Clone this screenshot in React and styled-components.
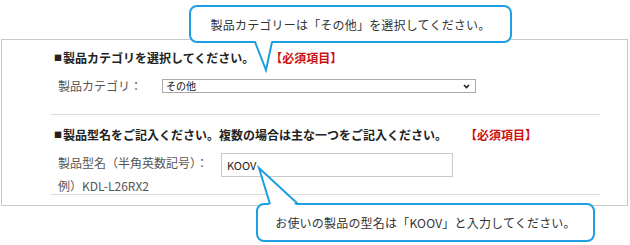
import styled, { createGlobalStyle } from "styled-components";

const GlobalStyle = createGlobalStyle`
  body {
    margin: 0;
    background: #fff;
    font-family: "Noto Sans CJK JP", "Noto Sans", sans-serif;
  }
`;

const Page = styled.div`
  position: relative;
  width: 630px;
  height: 245px;
  overflow: hidden;
  padding-top: 39px;
  box-sizing: border-box;
`;

const Panel = styled.div`
  margin-left: 1px;
  width: 627px;
  height: 167px;
  box-sizing: border-box;
  border: 1px solid #c9c9c9;
  padding: 10px 27px 0 49px;
  display: flex;
  flex-direction: column;
`;

const Heading = styled.div`
  display: flex;
  align-items: center;
  margin-top: ${(p) => p.$top || 0}px;
  padding-left: 3px;
  height: 16px;
  font-size: 12px;
  font-weight: 700;
  line-height: 16px;
  color: #222;
  white-space: nowrap;

  .mark {
    font-size: 8px;
    width: 9px;
  }
`;

const Required = styled.span`
  margin-left: ${(p) => p.$gap}px;
  color: #cc1111;
  font-weight: 700;
`;

const Row = styled.div`
  display: flex;
  align-items: ${(p) => p.$align || "center"};
  margin-top: ${(p) => p.$top}px;
  padding-left: 7px;
`;

const Label = styled.div`
  width: ${(p) => p.$width}px;
  flex-shrink: 0;
  font-size: 12px;
  line-height: 16px;
  color: #555;
  white-space: nowrap;
`;

const LabelColumn = styled.div`
  display: flex;
  flex-direction: column;
  padding-top: 2px;
`;

const Example = styled.div`
  margin-top: 8px;
  font-size: 12px;
  line-height: 14px;
  color: #555;
`;

const SelectBox = styled.div`
  position: relative;
  width: 314px;
  height: 14px;

  select {
    display: block;
    appearance: none;
    width: 314px;
    height: 14px;
    min-height: 0;
    box-sizing: border-box;
    border: 1px solid #a9a9a9;
    border-radius: 0;
    background: #fff;
    padding: 0 0 0 3px;
    margin: 0;
    font-family: inherit;
    font-size: 10px;
    line-height: 12px;
    color: #111;
    outline: none;
  }

  svg {
    position: absolute;
    right: 6px;
    top: 5px;
    pointer-events: none;
  }
`;

const TextInput = styled.input`
  width: 232px;
  height: 24px;
  box-sizing: border-box;
  border: 1px solid #c8c8c8;
  padding: 0 5px;
  margin: 0;
  font-family: inherit;
  font-size: 11px;
  color: #222;
  outline: none;
`;

const Divider = styled.div`
  margin-top: ${(p) => p.$top}px;
  height: 1px;
  background: #dcdcdc;
  flex-shrink: 0;
`;

const Bubble = styled.div`
  position: absolute;
  left: ${(p) => p.$x}px;
  top: ${(p) => p.$y}px;
  width: ${(p) => p.$w}px;
  height: ${(p) => p.$h}px;
  box-sizing: border-box;
  border: 2px solid #1d9fe2;
  border-radius: 8px;
  background: #fff;
  display: flex;
  align-items: center;
  justify-content: center;
  font-size: 12px;
  letter-spacing: 0.2px;
  color: #333;
  white-space: nowrap;
`;

const Tail = styled.svg`
  position: absolute;
  left: ${(p) => p.$x}px;
  top: ${(p) => p.$y}px;
  overflow: visible;
`;

const BLUE = "#1d9fe2";

export default function App() {
  return (
    <>
      <GlobalStyle />
      <Page>
        <Panel>
          <Heading>
            <span className="mark">■</span>
            製品カテゴリを選択してください。
            <Required $gap={16}>【必須項目】</Required>
          </Heading>
          <Row $top={12}>
            <Label $width={104}>製品カテゴリ：</Label>
            <SelectBox>
              <select defaultValue="other">
                <option value="other">その他</option>
              </select>
              <svg width="7" height="5" viewBox="0 0 7 5">
                <path d="M1 1 L3.5 3.5 L6 1" fill="none" stroke="#222" strokeWidth="1.6" />
              </svg>
            </SelectBox>
          </Row>
          <Divider $top={20} />
          <Heading $top={12}>
            <span className="mark">■</span>
            製品型名をご記入ください。複数の場合は主な一つをご記入ください。
            <Required $gap={18}>【必須項目】</Required>
          </Heading>
          <Row $top={10} $align="flex-start">
            <LabelColumn>
              <Label $width={163}>製品型名（半角英数記号）：</Label>
              <Example>例）KDL-L26RX2</Example>
            </LabelColumn>
            <TextInput defaultValue="KOOV" readOnly />
          </Row>
          <Divider $top={1} />
        </Panel>

        <Bubble $x={189} $y={5} $w={323} $h={38}>
          製品カテゴリーは「その他」を選択してください。
        </Bubble>
        <Tail $x={250} $y={38} width="26" height="34">
          <polygon points="5,1 22,1 16,32" fill="#fff" />
          <polyline points="5,4 16,32 22,4" fill="none" stroke={BLUE} strokeWidth="2" />
        </Tail>

        <Bubble $x={256} $y={203} $w={339} $h={39}>
          お使いの製品の型名は「KOOV」と入力してください。
        </Bubble>
        <Tail $x={250} $y={160} width="55" height="50">
          <polygon points="20,47 48,47 9,8" fill="#fff" />
          <polyline points="20,44 9,8 48,44" fill="none" stroke={BLUE} strokeWidth="2" />
        </Tail>
      </Page>
    </>
  );
}
